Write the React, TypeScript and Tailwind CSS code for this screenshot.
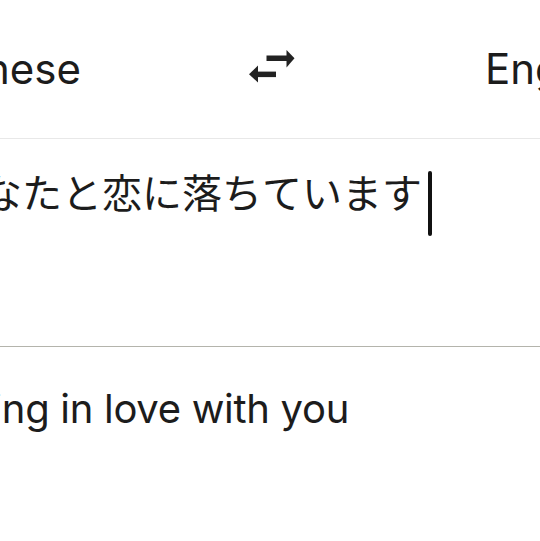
import React from 'react';

const SwapIcon: React.FC = () => (
  <svg width="46" height="33" viewBox="0 0 46 33" fill="#222222">
    <rect x="17.5" y="5.5" width="21" height="5.5" />
    <polygon points="37.5,0 45.5,8.25 37.5,17.5" />
    <polygon points="9,15.5 0,24.3 9,32.5" />
    <rect x="8" y="21.6" width="19" height="5.5" />
  </svg>
);

const App: React.FC = () => {
  return (
    <div
      className="w-[540px] h-[541px] overflow-hidden bg-white text-[#1c1c1c]"
      style={{ fontFamily: 'Inter, "Noto Sans CJK JP", sans-serif' }}
    >
      <div className="h-[139px] flex items-center border-b border-[#e8e8e8]">
        <div className="w-[81px] flex justify-end shrink-0">
          <span className="text-[42px] leading-none whitespace-nowrap">Japanese</span>
        </div>
        <div className="ml-[168px] mb-[6px] shrink-0">
          <SwapIcon />
        </div>
        <span className="ml-[190px] text-[42px] leading-none whitespace-nowrap">English</span>
      </div>
      <div className="h-[208px] border-b border-[#b4b4ac] pt-[20px]">
        <div className="w-[432px] flex justify-end items-start">
          <span
            className="text-[40px] leading-[65px] whitespace-nowrap"
            style={{ fontFamily: '"Noto Sans CJK JP", sans-serif' }}
          >
            あなたと恋に落ちています
          </span>
          <span className="ml-[6px] mt-[12px] w-[4px] h-[65px] rounded-full bg-[#111111] shrink-0" />
        </div>
      </div>
      <div className="pt-[42px]">
        <div className="w-[349px] flex justify-end">
          <span className="text-[40px] leading-none tracking-[-0.3px] whitespace-nowrap">
            I'm falling in love with you
          </span>
        </div>
      </div>
    </div>
  );
};

export default App;
